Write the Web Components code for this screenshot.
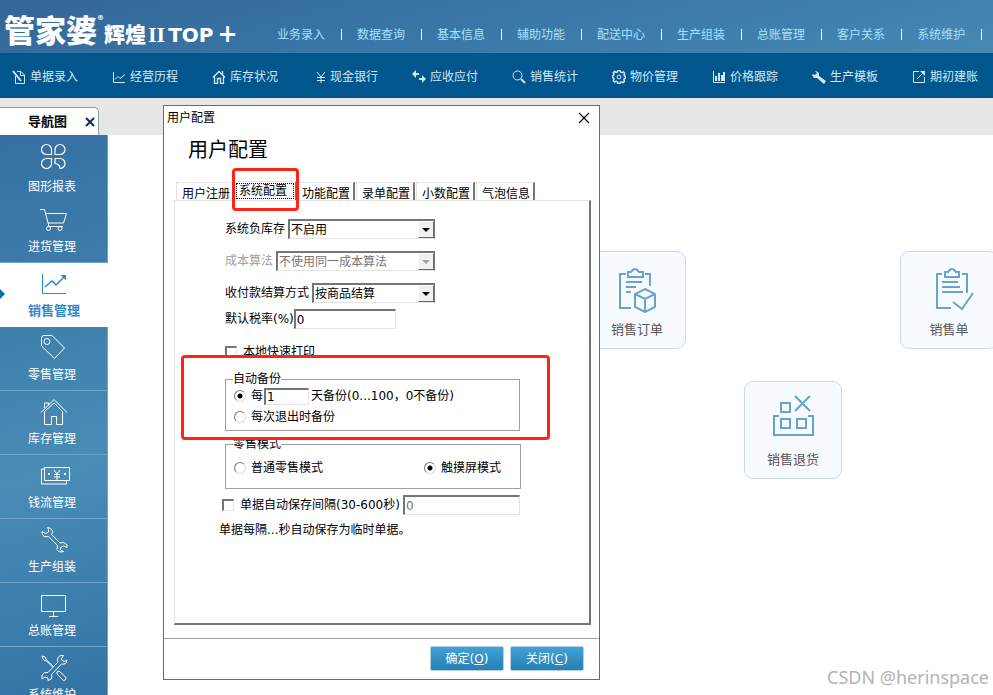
<!DOCTYPE html>
<html lang="zh-CN">
<head>
<meta charset="utf-8">
<title>管家婆辉煌II TOP+</title>
<style>
    html, body {
        margin: 0;
        height: 100%;
    }
    body {
        font: 12px/16px "DejaVu Sans", "Noto Sans CJK SC", sans-serif;
        color: #000;
        background: #fff;
        overflow: hidden;
    }
</style>
</head>
<body>
<erp-app></erp-app>

<script>
// Iconos: [ancho, alto, contenido]
const ICONS = {
    doc: [14, 14, '<path d="M3.500 6v7.500h9V5L9 1.500H5M8.500 2v3.500h4"/><path d="M1 1l8 10" stroke-width="2"/>'],
    trend: [14, 14, '<path d="M1.500 2v10.500H13M3 9.500l3-3 2 2 5-4"/>'],
    home: [14, 14, '<path d="M1 7.500l6-6 6 6M2.500 6v7.500h3V8.500h3v5h3V6M10.500 1v4" stroke-width="1.300"/>'],
    yen: [14, 14, '<path d="M5 2l4 5 4-5M9 7v6M5 7.500h8M5 10.500h8"/>'],
    swap: [14, 14, '<path d="M1 4h6M7 9h6" stroke-width="2"/><path d="M0 4l4-4v8zM14 9l-4-4v8z" fill="currentColor" stroke="none"/>'],
    search: [14, 14, '<circle cx="5.500" cy="5.500" r="4.500"/><path d="M9 9l4 4" stroke-width="2"/>'],
    gear: [14, 14, '<path d="M5.500 2l.5-1.500h2l.5 1.500 1.500.6 1.500-.7 1.200 1.400-.7 1.500.5 1.200 1.300.5v1.500l-1.400.6-.5 1.200.6 1.500-1.400 1.200-1.400-.7-1.300.6L8 13.500H6L5.500 12 4 11.400l-1.500.7-1.200-1.400.7-1.400-.5-1.300L.3 7.500V6L1.500 5.400 2 4.200l-.7-1.500L2.700 1.500l1.400.9z" stroke-width="1.500"/><circle cx="7" cy="7" r="2"/>'],
    bars: [14, 14, '<path d="M1.500 1v11.500H13"/><path d="M4 6v5M7 3v8M10 5v6M12 2v9" stroke-width="2"/>'],
    spanner: [14, 14, '<path d="M4 1l3 2v3l7 5-2 3-7-6H2L0 5l1-1 2 1 2-2-2-2z" fill="currentColor" stroke="none"/>'],
    open: [14, 14, '<path d="M7 1.500H1.500v11h11V7M5 9l7-7"/><path d="M8 1h5v5z" fill="currentColor" stroke="none"/>'],
    clover: [28, 28, '<path d="M6.500 2.500A5 5 0 0 0 6.500 12.500H11.500V7.500A5 5 0 0 0 6.500 2.500zM20 2.500A5 5 0 0 1 20 12.500H15V7.500A5 5 0 0 1 20 2.500zM6.500 26.500A5 5 0 0 1 6.500 16.500H11.500V21.500A5 5 0 0 1 6.500 26.500zM20 26.500A5 5 0 0 0 20 16.500H15V21.500A5 5 0 0 1 20 26.500z" stroke-width="1.200"/>'],
    cart: [28, 28, '<path d="M0 3.500h4.500l4.500 17h14M6 7.500h20.500l-3 9.500H8"/><circle cx="8.500" cy="22.500" r="2"/><circle cx="20" cy="22.500" r="2"/>'],
    chart: [28, 28, '<path d="M2.500 4v19.500H26"/><path d="M5 17l7-6 4 4 8-8" stroke-width="1.500"/><path d="M20.500 5h5.500v5.500z" fill="currentColor" stroke="none"/>'],
    tag: [28, 28, '<path d="M1.500 4q0-2.500 2.500-2.500h8L24.500 14 14.500 24.500 1.500 12z"/><circle cx="7" cy="7.500" r="3"/>'],
    house: [28, 28, '<path d="M1 14.500L14 1.500l13 13M4.500 13.500v13h7v-8h5v8h6v-13L14 5l-9.500 8.500M4.500 10V5h4v2"/>'],
    cash: [30, 28, '<path d="M4.500 5.500h25v13h-25zM4.500 7h-3v15h25v-3M14 8l3 4 3-4M17 12v6M14 12.500h6M14 15h6"/><path d="M8 12h2M24 12h2" stroke-width="2"/>'],
    wrench: [28, 28, '<path d="M7.500 1.500q5 .5 5 5l-1 2 8.500 8.500q4-2 7 2v2.500l-3.500-1.500-3 1.500v2.500l3 1.500q-5 1.500-6.500-2l.5-4L8.500 10.500q-4 1.500-6-1.500l-.5-3.500 3.500 2 3-1.500V3.500z"/>'],
    monitor: [28, 28, '<path d="M1.500 5.500h24v16h-24zM13.500 22v4M9 26.500h9"/>'],
    tools: [28, 28, '<path d="M23.500 1.500q-5-.5-6 3.500l.5 3L8 18.500q-4-1-6 2.500v4l3-2 3 1v2.500q4-.5 4-4l-.5-2L21.500 10q5 1 5.500-4l-3 1.500-3-2zM2 2l3 1 1.500 3L14 13M2 2l1.500 4 3 1 6 6M17 18l2-1 6.500 6q1.500 3-2 3.500L17 20z"/>'],
    order: [50, 48, '<path d="M14 9H8v34h11M33 9h5v12M16 7h3q4-6 8 0h4v5H16zM14 17h16M14 22h10M14 27h5M33 24l10 5v13l-10 5-10-5V29zM23 29l10 5 10-5M33 34v13" stroke-width="2"/>'],
    sale: [50, 48, '<path d="M18 9h-5v34h14M38 9h5v19M21 7h3q4-6 8 0h3v5H21zM18 17h16M18 22h18M18 27h21M29 37l9 7 11-16" stroke-width="2"/>'],
    refund: [50, 48, '<path d="M13 8h9v9h-9zM27 1l15 15M42 1L27 16M11 21H6v19h39V21h-5M13 24h9v9h-9zM29 24h9v9h-9z" stroke-width="2"/>'],
    close: [12, 12, '<path d="M1 1l10 10M11 1L1 11" stroke-width="1.200"/>'],
    closeBold: [12, 12, '<path d="M2 2l8 8M10 2l-8 8" stroke-width="2"/>']
};

class ErpIcon extends HTMLElement {
    constructor() {
        super();
        this.attachShadow({ mode: 'open' });
    }
    connectedCallback() {
        const [w, h, body] = ICONS[this.getAttribute('name')];
        this.shadowRoot.innerHTML = `
            <style>
                :host { display: inline-block; flex: none; }
                svg { display: block; fill: none; stroke: currentColor; }
            </style>
            <svg width="${w}" height="${h}" viewBox="0 0 ${w} ${h}" aria-hidden="true">${body}</svg>
        `;
    }
}
customElements.define('erp-icon', ErpIcon);

// Cabecera con el logo y el menú principal
class ErpHeader extends HTMLElement {
    constructor() {
        super();
        this.attachShadow({ mode: 'open' });
        const items = ['业务录入', '数据查询', '基本信息', '辅助功能', '配送中心', '生产组装', '总账管理', '客户关系', '系统维护'];
        this.shadowRoot.innerHTML = `
            <style>
                :host {
                    display: flex;
                    height: 53px;
                    overflow: hidden;
                    background: linear-gradient(165deg, #33669a, #3a78a7 50%, #4788b4);
                }
                .logo {
                    display: flex;
                    align-items: baseline;
                    flex: none;
                    box-sizing: border-box;
                    width: 277px;
                    padding: 9px 0 0 4px;
                    line-height: 44px;
                    color: #fff;
                    font-weight: 900;
                    white-space: nowrap;
                }
                .big { font-size: 31px; }
                .reg { font-size: 7px; align-self: flex-start; line-height: 18px; }
                .mid { font-size: 21px; }
                .roman { font: bold 22px "Liberation Serif", serif; margin: 0 3px 0 2px; }
                .top { font-size: 20px; }
                .plus { font-size: 24px; margin-left: 4px; }
                nav {
                    display: flex;
                    padding-top: 27px;
                }
                a {
                    flex: none;
                    color: #a5e0ff;
                    text-decoration: none;
                    white-space: nowrap;
                }
                i {
                    flex: none;
                    width: 1px;
                    height: 11px;
                    margin: 2px 15px 0 16px;
                    background: #fff;
                }
            </style>
            <div class="logo">
                <span class="big">管家婆</span><span class="reg">®</span>
                <span class="mid">辉煌</span><span class="roman">II</span>
                <span class="top">TOP</span><span class="plus">+</span>
            </div>
            <nav>${items.map(t => `<a href="#">${t}</a><i></i>`).join('')}</nav>
        `;
    }
}
customElements.define('erp-header', ErpHeader);

class ErpToolbar extends HTMLElement {
    constructor() {
        super();
        this.attachShadow({ mode: 'open' });
        const items = [
            ['doc', '单据录入'], ['trend', '经营历程'], ['home', '库存状况'], ['yen', '现金银行'],
            ['swap', '应收应付'], ['search', '销售统计'], ['gear', '物价管理'], ['bars', '价格跟踪'],
            ['spanner', '生产模板'], ['open', '期初建账']
        ];
        this.shadowRoot.innerHTML = `
            <style>
                :host {
                    display: flex;
                    align-items: center;
                    box-sizing: border-box;
                    height: 45px;
                    padding: 2px 0 0 12px;
                    overflow: hidden;
                    background: #00568d;
                }
                a {
                    display: flex;
                    flex: none;
                    align-items: center;
                    gap: 4px;
                    width: 100px;
                    color: #d3e6f3;
                    text-decoration: none;
                }
            </style>
            ${items.map(([icon, t]) => `<a href="#"><erp-icon name="${icon}"></erp-icon><span>${t}</span></a>`).join('')}
        `;
    }
}
customElements.define('erp-toolbar', ErpToolbar);

class ErpTabstrip extends HTMLElement {
    constructor() {
        super();
        this.attachShadow({ mode: 'open' });
        this.shadowRoot.innerHTML = `
            <style>
                :host {
                    display: flex;
                    align-items: flex-end;
                    height: 37px;
                    background: #e7e7e7;
                }
                .tab {
                    display: flex;
                    align-items: center;
                    box-sizing: border-box;
                    width: 99px;
                    height: 28px;
                    padding: 0 2px 0 28px;
                    border: 1px solid #8f9aa2;
                    border-width: 1px 1px 0 0;
                    border-radius: 0 5px 0 0;
                    background: #fff;
                    font-size: 13px;
                    font-weight: bold;
                }
                button {
                    margin-left: auto;
                    padding: 0;
                    border: 0;
                    background: none;
                    color: #12344b;
                }
                erp-icon { display: block; }
            </style>
            <div class="tab"><span>导航图</span><button aria-label="关闭导航图"><erp-icon name="closeBold"></erp-icon></button></div>
        `;
    }
}
customElements.define('erp-tabstrip', ErpTabstrip);

class ErpSidebar extends HTMLElement {
    constructor() {
        super();
        this.attachShadow({ mode: 'open' });
        const items = [
            ['clover', '图形报表', 'first'], ['cart', '进货管理', ''], ['chart', '销售管理', 'active'],
            ['tag', '零售管理', ''], ['house', '库存管理', ''], ['cash', '钱流管理', ''],
            ['wrench', '生产组装', ''], ['monitor', '总账管理', ''], ['tools', '系统维护', '']
        ];
        this.shadowRoot.innerHTML = `
            <style>
                :host {
                    display: block;
                    flex: none;
                    width: 108px;
                    overflow: hidden;
                    background: linear-gradient(165deg, #3670a3, #4080ad 35%, #4a8cb6 60%, #3273a5);
                }
                a {
                    display: flex;
                    flex-direction: column;
                    align-items: flex-start;
                    box-sizing: border-box;
                    height: 64px;
                    padding: 7px 0 0 40px;
                    border-bottom: 1px solid #6fa4cb;
                    border-right: 1px solid #6fa4cb;
                    color: #fff;
                    text-decoration: none;
                }
                span {
                    margin: 5px 0 0 -12px;
                }
                .first { border-bottom-color: transparent; }
                .first span { margin-top: 9px; }
                .active {
                    position: relative;
                    border-color: #fff;
                    background: #fff;
                    color: #2f89c8;
                    font-size: 13px;
                    font-weight: bold;
                }
                .active::before {
                    content: "";
                    position: absolute;
                    left: 0;
                    top: 26px;
                    border: 5px solid transparent;
                    border-left-color: #0072a8;
                    border-right: 0;
                }
            </style>
            ${items.map(([icon, t, cls]) => `<a href="#" class="${cls}"><erp-icon name="${icon}"></erp-icon><span>${t}</span></a>`).join('')}
        `;
    }
}
customElements.define('erp-sidebar', ErpSidebar);

class FlowCard extends HTMLElement {
    constructor() {
        super();
        this.attachShadow({ mode: 'open' });
        this.shadowRoot.innerHTML = `
            <style>
                :host { display: block; }
                button {
                    display: flex;
                    flex-direction: column;
                    align-items: center;
                    gap: 9px;
                    box-sizing: border-box;
                    width: 98px;
                    height: 98px;
                    padding: 13px 0 0;
                    border: 1px solid #c2dfe8;
                    border-radius: 9px;
                    background: #f7faff;
                    color: #555;
                    font: inherit;
                    font-size: 13px;
                }
                erp-icon { color: #66a5c8; }
            </style>
            <button><erp-icon name="${this.getAttribute('icon')}"></erp-icon><slot></slot></button>
        `;
    }
}
customElements.define('flow-card', FlowCard);

// Fila con etiqueta y control (select o caja de texto)
class FieldRow extends HTMLElement {
    constructor() {
        super();
        this.attachShadow({ mode: 'open' });
    }
    connectedCallback() {
        const value = this.getAttribute('value');
        const off = this.hasAttribute('disabled') || this.hasAttribute('locked') ? 'disabled' : '';
        const control = this.getAttribute('type') === 'select'
            ? `<select id="c" ${off}><option>${value}</option></select><i></i>`
            : `<input id="c" type="text" value="${value}" ${off}>`;
        this.shadowRoot.innerHTML = `
            <style>
                :host {
                    display: flex;
                    align-items: center;
                    gap: 3px;
                }
                :host([disabled]) { color: #a0a0a0; }
                .box {
                    display: flex;
                    flex: 1;
                    min-width: 0;
                    box-sizing: border-box;
                    height: 20px;
                    border: 1px solid #e3e3e3;
                    border-top: 2px solid #757575;
                    border-left: 2px solid #757575;
                }
                .select { border-right: 1px solid #757575; }
                select, input {
                    flex: 1;
                    min-width: 0;
                    margin: 0;
                    padding: 0 1px;
                    border: 0;
                    outline: 0;
                    border-radius: 0;
                    appearance: none;
                    background: #fff;
                    color: #000;
                    font: inherit;
                    opacity: 1;
                }
                select:disabled, input:disabled { color: #757575; }
                i {
                    display: flex;
                    align-items: center;
                    justify-content: center;
                    box-sizing: border-box;
                    width: 16px;
                    border: 1px solid #fff;
                    border-right-color: #696969;
                    border-bottom-color: #696969;
                    background: #f0f0f0;
                }
                i::before {
                    content: "";
                    border: 4px solid transparent;
                    border-top-color: #000;
                    border-bottom: 0;
                }
                :host([disabled]) i::before { border-top-color: #a0a0a0; }
            </style>
            <label for="c">${this.getAttribute('label')}</label>
            <div class="box ${this.getAttribute('type')}">${control}</div>
        `;
    }
}
customElements.define('field-row', FieldRow);

// Grupo con borde y título
class GroupBox extends HTMLElement {
    constructor() {
        super();
        this.attachShadow({ mode: 'open' });
        this.shadowRoot.innerHTML = `
            <style>
                :host { display: block; }
                fieldset {
                    min-width: 0;
                    margin: 0;
                    padding: 0 8px 4px;
                    border: 1px solid #a0a0a0;
                }
                legend {
                    margin-left: -1px;
                    padding: 0;
                    line-height: 16px;
                }
            </style>
            <fieldset><legend>${this.getAttribute('label')}</legend><slot></slot></fieldset>
        `;
    }
}
customElements.define('group-box', GroupBox);

class UserConfig extends HTMLElement {
    constructor() {
        super();
        this.attachShadow({ mode: 'open' });
        this.shadowRoot.innerHTML = `
            <style>
                :host {
                    display: block;
                    box-sizing: border-box;
                    width: 437px;
                    border: 1px solid #6b6b6b;
                    background: #fff;
                }
                .title {
                    display: flex;
                    align-items: center;
                    justify-content: space-between;
                    height: 24px;
                    padding: 0 9px 0 3px;
                }
                .title button {
                    padding: 0;
                    border: 0;
                    background: none;
                    color: #000;
                }
                .title erp-icon { display: block; }
                h1 {
                    margin: 6px 0 0 24px;
                    font-size: 20px;
                    font-weight: normal;
                    line-height: 28px;
                }
                .tabs {
                    display: flex;
                    height: 18px;
                    margin: 18px 0 0 12px;
                }
                .tabs button {
                    box-sizing: border-box;
                    width: 59px;
                    margin: 0 1px 0 0;
                    padding: 3px 0 0 2px;
                    border: 1px solid #e3e3e3;
                    border-right: 2px solid #757575;
                    border-bottom: 0;
                    background: #fff;
                    color: #000;
                    font: inherit;
                    white-space: nowrap;
                }
                .tabs button.on {
                    position: relative;
                    z-index: 1;
                    width: 63px;
                    height: 19px;
                    margin: -1px -1px 0 -2px;
                    padding: 0;
                }
                .on span {
                    display: block;
                    margin: 0 1px;
                    padding-right: 4px;
                    outline: 1px dotted #000;
                    outline-offset: -1px;
                }
                /* marcos rojos */
                .on::before, .mark::before {
                    content: "";
                    position: absolute;
                    z-index: -1;
                    border: 3px solid #ff2418;
                    border-radius: 4px;
                    pointer-events: none;
                }
                .on::before { inset: -14px -4px -11px -3px; }
                .mark::before { inset: -16px -30px -9px -44px; background: #fff; }
                .panel {
                    box-sizing: border-box;
                    min-height: 425px;
                    margin: 0 8px 0 10px;
                    padding: 18px 0 0 50px;
                    border: 1px solid #e3e3e3;
                    border-right: 2px solid #757575;
                    border-bottom: 2px solid #757575;
                }
                .fields {
                    display: flex;
                    flex-direction: column;
                    gap: 12px;
                    width: 210px;
                }
                .tax {
                    gap: 0;
                    width: 171px;
                    margin-top: 6px;
                }
                .check, .line {
                    display: flex;
                    align-items: center;
                }
                .check input {
                    box-sizing: border-box;
                    width: 12px;
                    height: 12px;
                    margin: 0 6px 0 0;
                    appearance: none;
                    border: 1px solid #e3e3e3;
                    border-top: 2px solid #757575;
                    border-left: 2px solid #757575;
                    background: #fff;
                }
                .print { margin-top: 15px; }
                .mark {
                    position: relative;
                    z-index: 1;
                    width: 295px;
                    margin-top: 11px;
                }
                .line label { margin-left: 5px; }
                .line { height: 18px; }
                .line + .line { margin-top: 3px; }
                .line input[type="radio"] {
                    box-sizing: border-box;
                    width: 12px;
                    height: 12px;
                    margin: 0;
                    appearance: none;
                    border: 1px solid #757575;
                    border-right-color: #ddd;
                    border-bottom-color: #ddd;
                    border-radius: 50%;
                    background: #fff;
                }
                .line input[type="radio"]:checked {
                    background: radial-gradient(circle, #000 2px, #fff 3px);
                }
                .line input[type="text"] {
                    box-sizing: border-box;
                    width: 45px;
                    height: 17px;
                    margin: 0 2px 0 1px;
                    padding: 0 1px;
                    border: 1px solid #e3e3e3;
                    border-top: 2px solid #757575;
                    border-left: 2px solid #757575;
                    font: inherit;
                }
                .retail {
                    width: 296px;
                    margin-top: 5px;
                }
                .retail .line { height: 32px; }
                .touch {
                    display: flex;
                    align-items: center;
                    margin-left: auto;
                    padding-right: 11px;
                }
                .auto {
                    width: 298px;
                    margin: 6px 0 0 -3px;
                }
                .auto field-row { flex: 1; }
                p { margin: 7px 0 0 -6px; }
                footer {
                    display: flex;
                    justify-content: flex-end;
                    gap: 6px;
                    margin-top: 13px;
                    padding: 7px 15px 8px 0;
                    border-top: 1px solid #a0a0a0;
                }
                footer button {
                    width: 74px;
                    height: 25px;
                    padding: 0;
                    border: 1px solid #b5cfdd;
                    border-radius: 2px;
                    background: linear-gradient(#42a1d6, #2380b5);
                    color: #fff;
                    font: inherit;
                }
            </style>
            <div class="title"><span>用户配置</span><button aria-label="关闭窗口"><erp-icon name="close"></erp-icon></button></div>
            <h1>用户配置</h1>
            <div class="tabs">
                <button>用户注册</button>
                <button class="on"><span>系统配置</span></button>
                <button>功能配置</button>
                <button>录单配置</button>
                <button>小数配置</button>
                <button>气泡信息</button>
            </div>
            <div class="panel">
                <div class="fields">
                    <field-row type="select" label="系统负库存" value="不启用"></field-row>
                    <field-row type="select" label="成本算法" value="不使用同一成本算法" disabled></field-row>
                    <field-row type="select" label="收付款结算方式" value="按商品结算"></field-row>
                </div>
                <field-row class="tax" type="text" label="默认税率(%)" value="0"></field-row>
                <div class="check print"><input type="checkbox" id="print"><label for="print">本地快速打印</label></div>

                <group-box class="mark" label="自动备份">
                    <div class="line">
                        <input type="radio" name="backup" id="byDay" checked><label for="byDay">每</label>
                        <input type="text" value="1" id="days" aria-label="备份间隔天数"><span>天备份(0...100，0不备份)</span>
                    </div>
                    <div class="line"><input type="radio" name="backup" id="onExit"><label for="onExit">每次退出时备份</label></div>
                </group-box>

                <group-box class="retail" label="零售模式">
                    <div class="line">
                        <input type="radio" name="mode" id="normal"><label for="normal">普通零售模式</label>
                        <div class="touch"><input type="radio" name="mode" id="touch" checked><label for="touch">触摸屏模式</label></div>
                    </div>
                </group-box>

                <div class="auto check">
                    <input type="checkbox" aria-label="单据自动保存">
                    <field-row type="text" label="单据自动保存间隔(30-600秒)" value="0" locked></field-row>
                </div>
                <p>单据每隔...秒自动保存为临时单据。</p>
            </div>
            <footer>
                <button>确定(<u>O</u>)</button>
                <button>关闭(<u>C</u>)</button>
            </footer>
        `;
        this.shadowRoot.querySelector('.title button').addEventListener('click', () => this.remove());
    }
}
customElements.define('user-config', UserConfig);

class ErpApp extends HTMLElement {
    constructor() {
        super();
        this.attachShadow({ mode: 'open' });
        this.shadowRoot.innerHTML = `
            <style>
                :host {
                    display: flex;
                    flex-direction: column;
                    position: relative;
                    height: 100vh;
                    overflow: hidden;
                }
                erp-header, erp-toolbar, erp-tabstrip { flex: none; }
                .main {
                    display: flex;
                    flex: 1;
                    min-height: 0;
                }
                .canvas {
                    position: relative;
                    flex: 1;
                    overflow: hidden;
                }
                flow-card { position: absolute; }
                user-config {
                    position: absolute;
                    left: 163px;
                    top: 105px;
                }
                .watermark {
                    position: absolute;
                    right: 4px;
                    bottom: 6px;
                    color: #b3b3b3;
                    font: 18px/24px "Noto Sans", sans-serif;
                }
            </style>
            <erp-header></erp-header>
            <erp-toolbar></erp-toolbar>
            <erp-tabstrip></erp-tabstrip>
            <div class="main">
                <erp-sidebar></erp-sidebar>
                <div class="canvas">
                    <flow-card icon="order" style="left: 480px; top: 116px">销售订单</flow-card>
                    <flow-card icon="sale" style="left: 792px; top: 116px">销售单</flow-card>
                    <flow-card icon="refund" style="left: 636px; top: 246px">销售退货</flow-card>
                </div>
            </div>
            <user-config></user-config>
            <div class="watermark">CSDN @herinspace</div>
        `;
    }
}
customElements.define('erp-app', ErpApp);
</script>
</body>
</html>
